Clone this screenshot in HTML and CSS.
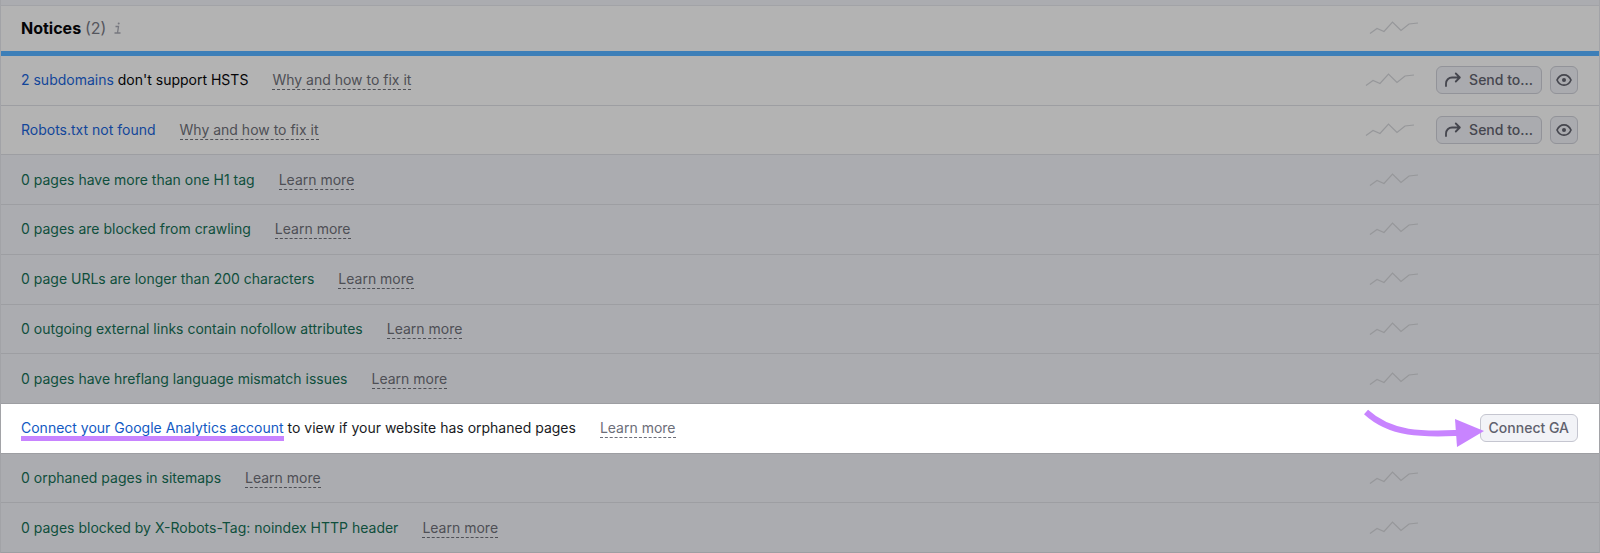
FILE: index.html
```
<!DOCTYPE html>
<html lang="en">
<head>
<meta charset="utf-8">
<title>Notices</title>
<meta name="viewport" content="width=device-width, initial-scale=1">
<link rel="stylesheet" href="styles.css">
</head>
<body>
<svg class="defs" aria-hidden="true">
  <symbol id="trend" viewBox="0 0 50 14"><path d="M1 12.500l7-5 7 3L23.500 1l8.500 8.500 8-6.500 9-1" fill="none" stroke="currentColor" stroke-width="1.200"/></symbol>
  <symbol id="send" viewBox="0 0 16 16"><path d="M1 14v-2.500A6 6 0 0 1 7 5.500h7.500M10.800 1.500l4 4-4 4" fill="none" stroke="currentColor" stroke-width="1.800" stroke-linecap="round" stroke-linejoin="round"/></symbol>
  <symbol id="eye" viewBox="0 0 16 16"><path d="M1 8c1.500-3.500 4-5.200 7-5.200s5.500 1.700 7 5.200c-1.500 3.500-4 5.200-7 5.200S2.500 11.500 1 8z" fill="none" stroke="currentColor" stroke-width="1.700" stroke-linejoin="round"/><circle cx="8" cy="8" r="2" fill="currentColor"/></symbol>
</svg>
<main class="panel">
  <header class="head">
    <h1 class="title">Notices <span class="count">(2)</span></h1>
    <svg class="info" viewBox="0 0 8 12" role="img" aria-label="Info"><path d="M1.500 4.500h3L3.500 11M.5 11h6" fill="none" stroke="currentColor" stroke-width="1.300"/><circle cx="4.700" cy="1.500" r="1" fill="currentColor"/></svg>
    <svg class="trend"><use href="#trend"/></svg>
    <div class="actions"></div>
  </header>
  <ul class="list">
    <li class="row issue"><p class="text"><a class="link" href="#">2 subdomains</a> don't support HSTS</p><button class="more">Why and how to fix it</button><svg class="trend"><use href="#trend"/></svg><div class="actions"><button class="btn"><svg class="icon"><use href="#send"/></svg>Send to...</button><button class="btn square" aria-label="Hide"><svg class="icon"><use href="#eye"/></svg></button></div></li>
    <li class="row issue"><p class="text"><a class="link" href="#">Robots.txt not found</a></p><button class="more">Why and how to fix it</button><svg class="trend"><use href="#trend"/></svg><div class="actions"><button class="btn"><svg class="icon"><use href="#send"/></svg>Send to...</button><button class="btn square" aria-label="Hide"><svg class="icon"><use href="#eye"/></svg></button></div></li>
    <li class="row"><p class="text">0 pages have more than one H1 tag</p><button class="more">Learn more</button><svg class="trend"><use href="#trend"/></svg><div class="actions"></div></li>
    <li class="row"><p class="text">0 pages are blocked from crawling</p><button class="more">Learn more</button><svg class="trend"><use href="#trend"/></svg><div class="actions"></div></li>
    <li class="row"><p class="text">0 page URLs are longer than 200 characters</p><button class="more">Learn more</button><svg class="trend"><use href="#trend"/></svg><div class="actions"></div></li>
    <li class="row"><p class="text">0 outgoing external links contain nofollow attributes</p><button class="more">Learn more</button><svg class="trend"><use href="#trend"/></svg><div class="actions"></div></li>
    <li class="row"><p class="text">0 pages have hreflang language mismatch issues</p><button class="more">Learn more</button><svg class="trend"><use href="#trend"/></svg><div class="actions"></div></li>
    <li class="row active"><p class="text"><a class="link marked" href="#">Connect your Google Analytics account</a> to view if your website has orphaned pages</p><button class="more">Learn more</button><div class="actions"><button class="btn">Connect GA</button><svg class="arrow" viewBox="0 0 120 40" aria-hidden="true"><path d="M2 4C28 28 62 26 94 25" fill="none" stroke="currentColor" stroke-width="6"/><path d="M91 11l29 12-27 16z" fill="currentColor"/></svg></div></li>
    <li class="row"><p class="text">0 orphaned pages in sitemaps</p><button class="more">Learn more</button><svg class="trend"><use href="#trend"/></svg><div class="actions"></div></li>
    <li class="row"><p class="text">0 pages blocked by X-Robots-Tag: noindex HTTP header</p><button class="more">Learn more</button><svg class="trend"><use href="#trend"/></svg><div class="actions"></div></li>
  </ul>
</main>
</body>
</html>
```
FILE: styles.css
```
* { box-sizing: border-box; }
body {
  margin: 0;
  background: #abacb0;
  color: #050507;
  font: 14px/20px Inter, "Liberation Sans", sans-serif;
}
.defs { position: absolute; width: 0; height: 0; }
.panel {
  display: flex;
  flex-direction: column;
  min-height: 100vh;
  padding-top: 5px;
  border: solid #a2a3a7;
  border-width: 0 1px;
}
.head {
  display: flex;
  align-items: center;
  height: 51px;
  padding: 0 20px 2px;
  background: #b3b3b3;
  border-top: 1px solid #a2a3a7;
  border-bottom: 5px solid #3d7fb8;
}
.title { margin: 0; font-size: 16px; font-weight: 700; }
.count { color: #55565d; font-weight: 400; }
.info { width: 8px; height: 12px; margin-left: 8px; color: #77787f; }
.list {
  display: flex;
  flex: 1;
  flex-direction: column;
  margin: 0;
  padding: 0;
  list-style: none;
}
.row {
  display: flex;
  flex: 1 0 0;
  align-items: center;
  min-height: 48px;
  padding: 0 21px 0 20px;
  border-bottom: 1px solid #9d9ea2;
  color: #0f4f3c;
}
.issue { background: #b3b3b3; color: #050507; }
.active { background: #fff; color: #191b23; }
.text { margin: 0 24px 0 0; }
.link { color: #12469a; text-decoration: none; }
.active .link { color: #1259c3; }
.marked { box-shadow: 0 5px #c884ff; }
.more {
  margin-top: 1px;
  padding: 0;
  border: 0;
  border-bottom: 1px dashed currentColor;
  background: none;
  color: #4e4f55;
  font: inherit;
  line-height: 18px;
}
.active .more { color: #6c6e79; }
.trend { width: 50px; height: 14px; margin-left: auto; color: #96979a; }
.actions {
  position: relative;
  display: flex;
  justify-content: flex-end;
  gap: 8px;
  min-width: 159px;
}
.issue .actions { min-width: 163px; }
.head .actions { min-width: 160px; }
.active .actions { margin-left: auto; }
.btn {
  display: flex;
  align-items: center;
  gap: 8px;
  height: 28px;
  padding: 0 8px;
  border: 1px solid #929399;
  border-radius: 6px;
  background: #aaabaf;
  color: #45464e;
  font: inherit;
  font-weight: 500;
}
.square { padding: 0 5px; }
.active .btn { background: #f2f3f7; border-color: #c5c6d0; color: #5f616d; }
.icon { width: 16px; height: 16px; }
.arrow { position: absolute; top: -6px; right: 94px; width: 120px; height: 40px; color: #c884ff; }
```
